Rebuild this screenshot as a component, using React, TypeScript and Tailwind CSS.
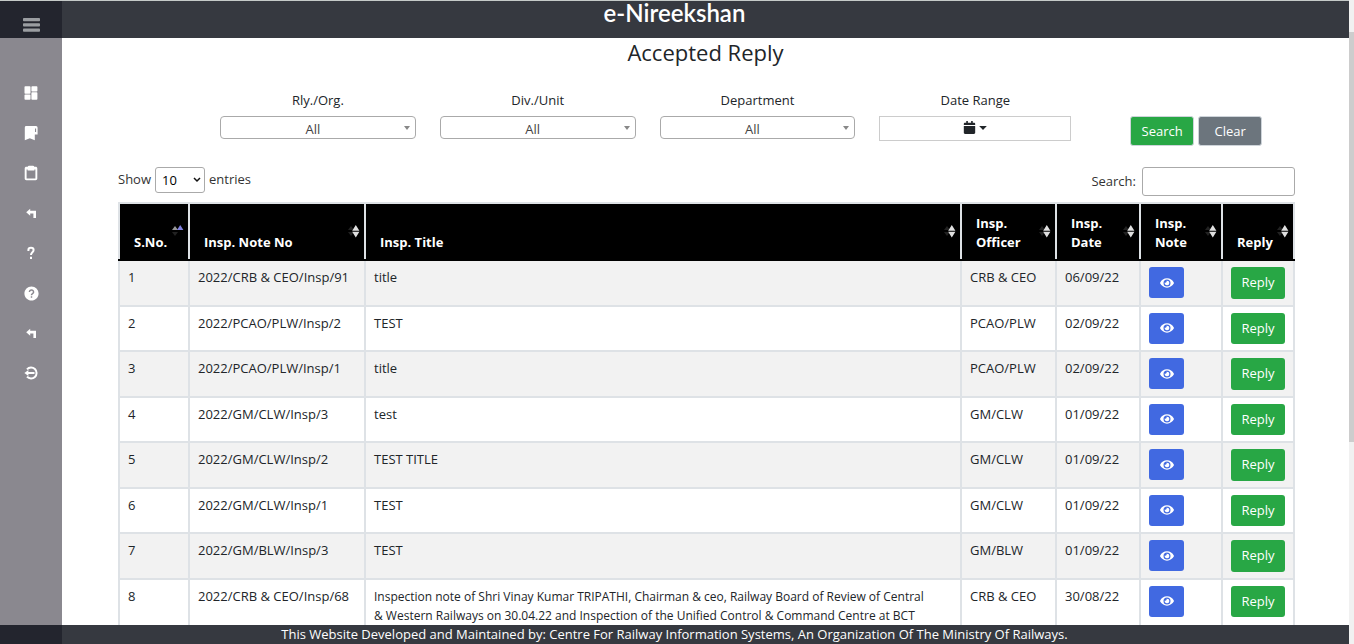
import React from "react";
import { BiSolidHelpCircle } from "react-icons/bi";
import { FaCalendar, FaEye } from "react-icons/fa";

const DashboardIcon = () => (
  <svg viewBox="0 0 14 14" className="size-3.5" fill="currentColor" aria-hidden="true">
    <rect x=".5" y=".3" width="6" height="7.500" rx=".8" />
    <rect x=".5" y="8.600" width="6" height="5.200" rx=".8" />
    <rect x="7.400" y=".3" width="6" height="5.200" rx=".8" />
    <rect x="7.400" y="6.300" width="6" height="7.500" rx=".8" />
  </svg>
);

const BackIcon = () => (
  <svg viewBox="0 0 14 14" className="size-3.5" fill="currentColor" aria-hidden="true">
    <path d="M2.200 6.300 6.200 2.800v1.900H12V12H9.400V7.400H6.200v2.400z" />
  </svg>
);

const BookmarkIcon = () => (
  <svg viewBox="0 0 14 16" className="h-4 w-3.5" fill="currentColor" aria-hidden="true">
    <path fillRule="evenodd" d="M2.200 1H12a1.800 1.800 0 0 1 1.600 1.800V9.600h-2.800v5.600L5.800 13.200.8 15.200V2.400A1.400 1.400 0 0 1 2.200 1zM11 3.400V7h1.100V3.400z" />
  </svg>
);

const ClipboardIcon = () => (
  <svg viewBox="0 0 14 16" className="h-4 w-3.5" fill="currentColor" aria-hidden="true">
    <path fillRule="evenodd" d="M2.400 1.700h1.300C3.900 1 4.300.7 5 .7h4c.7 0 1.100.3 1.300 1h1.300c1 0 1.700.7 1.700 1.700v10.200c0 1-.7 1.700-1.700 1.700H2.400c-1 0-1.700-.7-1.700-1.700V3.400c0-1 .7-1.700 1.700-1.700zM2.600 4.600v8.800h8.800V4.600h-1v1H3.600v-1z" />
  </svg>
);

const QuestionIcon = () => (
  <svg viewBox="0 0 10 14" className="h-3.5 w-2.5" fill="none" stroke="currentColor" strokeWidth="2" aria-hidden="true">
    <path d="M2.400 5V4a2.600 2.300 0 0 1 5.200 0c0 2.200-2.600 2.200-2.600 5" />
    <path d="M5 10.700v2.200" />
  </svg>
);

const LogoutIcon = () => (
  <svg viewBox="0 0 16 16" className="size-4" fill="none" stroke="currentColor" strokeWidth="2" aria-hidden="true">
    <path d="M4 4.300a5.500 5.500 0 1 1 0 7.400" />
    <path d="M4 8h7.500" />
    <path d="M5.400 5v6L1.400 8z" fill="currentColor" stroke="none" />
  </svg>
);

const MenuIcon = () => (
  <svg viewBox="0 0 17 14" className="h-3.5 w-[17px]" fill="currentColor" aria-hidden="true">
    <rect width="17" height="3.300" rx=".8" />
    <rect y="5.200" width="17" height="3.300" rx=".8" />
    <rect y="10.400" width="17" height="3.300" rx=".8" />
  </svg>
);

const nav = [
  { label: "Dashboard", icon: <DashboardIcon /> },
  { label: "Notes", icon: <BookmarkIcon /> },
  { label: "Compliance", icon: <ClipboardIcon /> },
  { label: "Replies", icon: <BackIcon /> },
  { label: "Queries", icon: <QuestionIcon /> },
  { label: "Help", icon: <BiSolidHelpCircle size={17} /> },
  { label: "Back", icon: <BackIcon /> },
  { label: "Log out", icon: <LogoutIcon /> },
];

const columns = [
  { title: "S.No.", width: "w-[70px]" },
  { title: "Insp. Note No", width: "w-[176px]" },
  { title: "Insp. Title", width: "" },
  { title: "Insp. Officer", width: "w-[95px]" },
  { title: "Insp. Date", width: "w-[84px]" },
  { title: "Insp. Note", width: "w-[82px]" },
  { title: "Reply", width: "w-[72px]" },
];

const rows = [
  ["1", "2022/CRB & CEO/Insp/91", "title", "CRB & CEO", "06/09/22"],
  ["2", "2022/PCAO/PLW/Insp/2", "TEST", "PCAO/PLW", "02/09/22"],
  ["3", "2022/PCAO/PLW/Insp/1", "title", "PCAO/PLW", "02/09/22"],
  ["4", "2022/GM/CLW/Insp/3", "test", "GM/CLW", "01/09/22"],
  ["5", "2022/GM/CLW/Insp/2", "TEST TITLE", "GM/CLW", "01/09/22"],
  ["6", "2022/GM/CLW/Insp/1", "TEST", "GM/CLW", "01/09/22"],
  ["7", "2022/GM/BLW/Insp/3", "TEST", "GM/BLW", "01/09/22"],
  [
    "8",
    "2022/CRB & CEO/Insp/68",
    "Inspection note of Shri Vinay Kumar TRIPATHI, Chairman & ceo, Railway Board of Review of Central & Western Railways on 30.04.22 and Inspection of the Unified Control & Command Centre at BCT",
    "CRB & CEO",
    "30/08/22",
  ],
];

function SortIcon({ active }: { active: boolean }) {
  return (
    <svg viewBox="0 0 12 14" className="absolute right-1 top-5 h-3.5 w-3" aria-hidden="true">
      <path d="M0 6l3-4 3 4z" fill={active ? "#989898" : "#222"} />
      <path d="M0 8l3 4 3-4z" fill="#222" />
      {active ? (
        <path d="M5 6l3.200-5 3.200 5z" fill="#7f80df" />
      ) : (
        <path d="M4.200 6.700l3.600-5.700 3.600 5.700zM4.200 7.700l3.600 5.700 3.600-5.700z" fill="#e0e0e0" />
      )}
    </svg>
  );
}

function FilterSelect({ id, label }: { id: string; label: string }) {
  return (
    <div className="flex flex-col items-center px-3">
      <label htmlFor={id} className="mb-1.5 leading-5">{label}</label>
      <div className="relative w-full">
        <select
          id={id}
          className="block h-[23px] w-full appearance-none rounded border border-[#aaa] bg-white pl-1 pr-3.5 pt-0.5 text-center leading-5 text-[#444]"
        >
          <option>All</option>
        </select>
        <svg viewBox="0 0 6 4" className="pointer-events-none absolute right-1.5 top-2.5 h-1 w-1.5" fill="#888" aria-hidden="true">
          <path d="M0 0h6L3 4z" />
        </svg>
      </div>
    </div>
  );
}

export default function App() {
  return (
    <div className="flex h-screen overflow-hidden bg-white font-['Open_Sans','Noto_Sans',sans-serif] text-[13px] text-[#212529]">
      <div className="flex min-w-0 flex-1 flex-col border-t border-[#c5cac8]">
        <header className="flex h-[37px] shrink-0 bg-[#363940]">
          <button aria-label="Menu" className="flex w-[62px] items-center justify-center bg-[#23252e] pt-2.5 text-[#9a9da1]">
            <MenuIcon />
          </button>
          <h1 className="mr-[62px] flex-1 text-center font-['Lato',sans-serif] text-2xl leading-6 font-semibold text-white">
            e-Nireekshan
          </h1>
        </header>

        <div className="flex min-h-0 flex-1">
          <nav className="w-[62px] shrink-0 bg-[#8a888f] pt-[35px] text-white">
            <ul>
              {nav.map((item) => (
                <li key={item.label}>
                  <a href="#" aria-label={item.label} className="flex h-10 items-center justify-center">
                    {item.icon}
                  </a>
                </li>
              ))}
            </ul>
          </nav>

          <main className="min-w-0 flex-1 overflow-hidden">
            <h2 className="text-center text-[22px] leading-7">Accepted Reply</h2>

            <form className="mt-6 grid grid-cols-5 pl-[146px] pr-[42px]">
              <FilterSelect id="rly" label="Rly./Org." />
              <FilterSelect id="div" label="Div./Unit" />
              <FilterSelect id="dept" label="Department" />
              <div className="flex flex-col items-center pl-3 pr-4">
                <label htmlFor="range" className="mb-1.5 leading-5">Date Range</label>
                <button id="range" type="button" className="flex h-[25px] w-full items-center justify-center gap-0.5 border border-[#ccc] pb-0.5">
                  <FaCalendar size={13} />
                  <svg viewBox="0 0 10 6" className="h-1.5 w-2.5" fill="currentColor" aria-hidden="true">
                    <path d="M1.200 1h7.600L5 5z" />
                  </svg>
                </button>
              </div>
              <div className="flex items-end justify-center gap-1 pt-[26px] pr-0.5">
                <button type="button" className="h-[30px] w-16 rounded-[3px] border border-[#ced4da] bg-[#28a745] pt-0.5 text-white">Search</button>
                <button type="button" className="h-[30px] w-16 rounded-[3px] border border-[#ced4da] bg-[#6c757d] pt-0.5 text-white">Clear</button>
              </div>
            </form>

            <section className="pl-14 pr-[54px]">
              <div className="mt-[21px] flex items-start justify-between text-[#333]">
                <label className="flex items-center gap-1">
                  Show
                  <span className="relative">
                    <select className="block h-[26px] w-[50px] appearance-none rounded-[3px] border border-[#aaa] bg-white pl-1.5 leading-5 text-black">
                      <option>10</option>
                    </select>
                    <svg viewBox="0 0 8 6" className="pointer-events-none absolute right-1 top-2.5 h-1.5 w-2" fill="none" stroke="#111" strokeWidth="1.500" aria-hidden="true">
                      <path d="M1 1l3 3 3-3" />
                    </svg>
                  </span>
                  entries
                </label>
                <label className="flex items-center gap-1.5">
                  Search:
                  <input type="search" className="h-[29px] w-[153px] rounded-[3px] border border-[#aaa] bg-white px-1" />
                </label>
              </div>

              <table className="mt-1.5 w-full table-fixed border-collapse border-2 border-[#dee2e6]">
                <thead>
                  <tr className="bg-black text-white">
                    {columns.map((c, i) => (
                      <th key={c.title} className={`h-[57px] border-2 border-[#dee2e6] border-b-black p-0 align-bottom ${c.width}`}>
                        <div className="relative flex h-[55px] items-end pb-[7px] pl-3.5 pr-4 text-left leading-[19px] font-bold">
                          {c.title}
                          <SortIcon active={i === 0} />
                        </div>
                      </th>
                    ))}
                  </tr>
                </thead>
                <tbody>
                  {rows.map((r) => (
                    <tr key={r[0]} className="odd:bg-[#f2f2f2]">
                      {r.map((cell, i) => (
                        <td key={i} className="border-2 border-[#dee2e6] px-2 pt-[7px] align-top leading-normal">
                          {cell.length > 80 ? <p className="pr-5 text-xs leading-[19px]">{cell}</p> : cell}
                        </td>
                      ))}
                      <td className="border-2 border-[#dee2e6] px-2 py-1.5 align-top">
                        <button aria-label={`View note ${r[0]}`} className="flex h-[31px] w-[35px] items-center justify-center rounded-[3px] bg-[#4169e1] text-white">
                          <FaEye size={14} />
                        </button>
                      </td>
                      <td className="border-2 border-[#dee2e6] px-2 py-1.5 align-top">
                        <button className="block w-full rounded-[3px] bg-[#28a745] py-1.5 leading-normal text-white">Reply</button>
                      </td>
                    </tr>
                  ))}
                </tbody>
              </table>
            </section>
          </main>
        </div>

        <footer className="flex h-[19px] shrink-0 bg-[#363940] leading-[19px] text-white">
          <div className="w-[62px] bg-[#23252e]" />
          <p className="mr-[62px] flex-1 text-center">
            This Website Developed and Maintained by: Centre For Railway Information Systems, An Organization Of The Ministry Of Railways.
          </p>
        </footer>
      </div>
      <div className="w-[5px] shrink-0 bg-[#f1f1f1] pt-8" aria-hidden="true">
        <div className="h-[67%] bg-[#cdcdcd]" />
      </div>
    </div>
  );
}
